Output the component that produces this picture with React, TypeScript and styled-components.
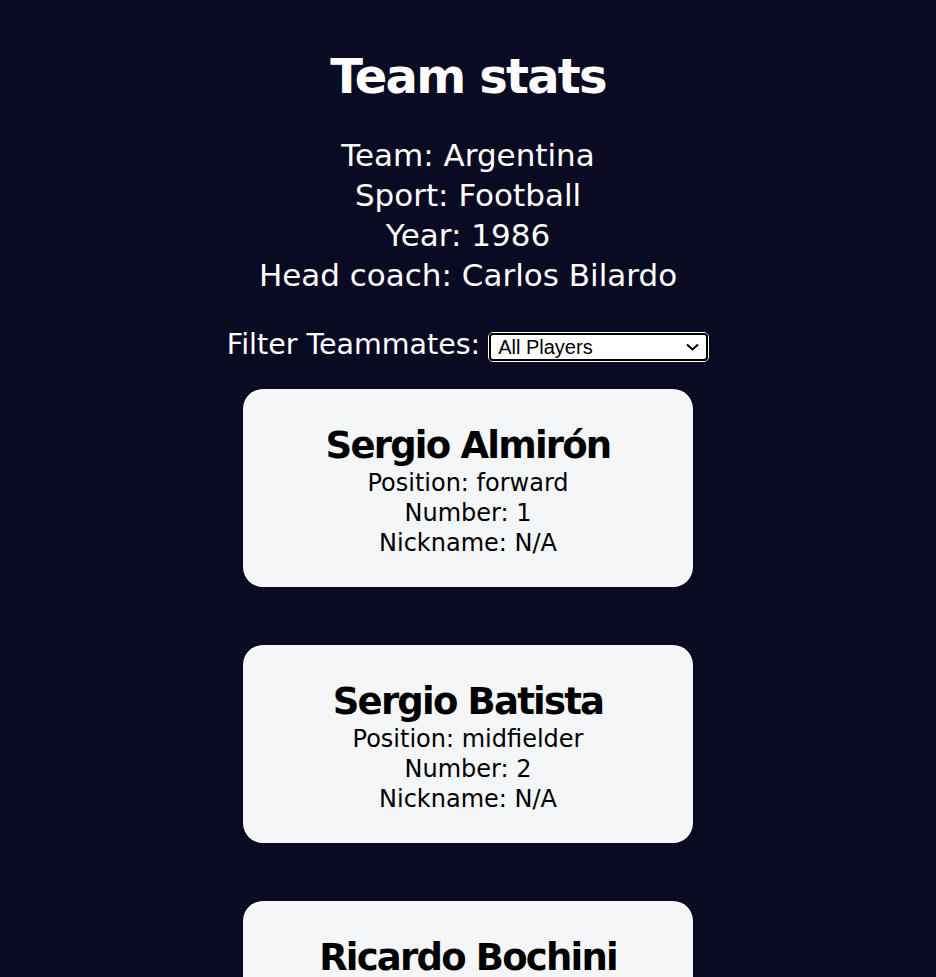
import React from "react";
import styled, { createGlobalStyle } from "styled-components";

const GlobalStyle = createGlobalStyle`
  * { box-sizing: border-box; margin: 0; padding: 0; }
  body {
    background-color: #0a0a23;
    font-family: "DejaVu Sans", Verdana, sans-serif;
    text-align: center;
    padding: 0 15px;
  }
`;

const Page = styled.main`
  display: flex;
  flex-direction: column;
  align-items: center;
  padding-top: 46px;
`;

const Title = styled.h1`
  color: #ffffff;
  font-size: 48px;
  line-height: 60px;
  font-weight: bold;
  letter-spacing: -1.8px;
`;

const Stats = styled.div`
  margin-top: 29px;
  display: flex;
  flex-direction: column;
  align-items: center;
`;

const StatLine = styled.p`
  color: #ffffff;
  font-size: 31px;
  line-height: 40px;
`;

const FilterRow = styled.div`
  margin-top: 37px;
  display: flex;
  align-items: center;
  gap: 8px;
  height: 29px;
`;

const FilterLabel = styled.label`
  color: #ffffff;
  font-size: 28.5px;
  line-height: 29px;
  margin-bottom: 5px;
`;

const SelectWrap = styled.span`
  position: relative;
  display: inline-flex;
  width: 221px;
  height: 30px;
  border-radius: 5px;
  border: 1px solid #ffffff;
`;

const Select = styled.select`
  appearance: none;
  width: 100%;
  height: 100%;
  border: 2px solid #000000;
  border-radius: 4px;
  background: #ffffff;
  font-family: "Liberation Sans", Arial, sans-serif;
  font-size: 20px;
  color: #000000;
  padding: 0 24px 0 7px;
  outline: none;
`;

const Chevron = styled.svg`
  position: absolute;
  right: 9px;
  top: 50%;
  transform: translateY(-50%);
  pointer-events: none;
`;

const Cards = styled.div`
  margin-top: 28px;
  display: flex;
  flex-direction: column;
  align-items: center;
  gap: 58px;
`;

const Card = styled.div`
  width: 450px;
  background-color: #f5f6f7;
  border-radius: 20px;
  padding: 35px 20px 29px;
`;

const PlayerName = styled.h2`
  color: #000000;
  font-size: 37px;
  line-height: 44px;
  font-weight: bold;
  letter-spacing: -1.8px;
`;

const PlayerInfo = styled.p`
  color: #000000;
  font-size: 24px;
  line-height: 30px;
`;

const players = [
  { name: "Sergio Almirón", position: "forward", number: 1, nickname: "N/A" },
  { name: "Sergio Batista", position: "midfielder", number: 2, nickname: "N/A" },
  { name: "Ricardo Bochini", position: "midfielder", number: 3, nickname: "El Bocha" },
];

export default function App() {
  return (
    <>
      <GlobalStyle />
      <Page>
        <Title>Team stats</Title>
        <Stats>
          <StatLine>Team: Argentina</StatLine>
          <StatLine>Sport: Football</StatLine>
          <StatLine>Year: 1986</StatLine>
          <StatLine>Head coach: Carlos Bilardo</StatLine>
        </Stats>
        <FilterRow>
          <FilterLabel htmlFor="players">Filter Teammates:</FilterLabel>
          <SelectWrap>
            <Select id="players" defaultValue="all">
              <option value="all">All Players</option>
              <option value="nickname">Nicknames</option>
              <option value="forward">Forwards</option>
              <option value="midfielder">Midfielders</option>
              <option value="defender">Defenders</option>
              <option value="goalkeeper">Goalkeepers</option>
            </Select>
            <Chevron width="13" height="8" viewBox="0 0 13 8" fill="none">
              <path d="M1 1.5 L6.5 6.5 L12 1.5" stroke="#000" strokeWidth="2" />
            </Chevron>
          </SelectWrap>
        </FilterRow>
        <Cards>
          {players.map((p) => (
            <Card key={p.name}>
              <PlayerName>{p.name}</PlayerName>
              <PlayerInfo>Position: {p.position}</PlayerInfo>
              <PlayerInfo>Number: {p.number}</PlayerInfo>
              <PlayerInfo>Nickname: {p.nickname}</PlayerInfo>
            </Card>
          ))}
        </Cards>
      </Page>
    </>
  );
}
